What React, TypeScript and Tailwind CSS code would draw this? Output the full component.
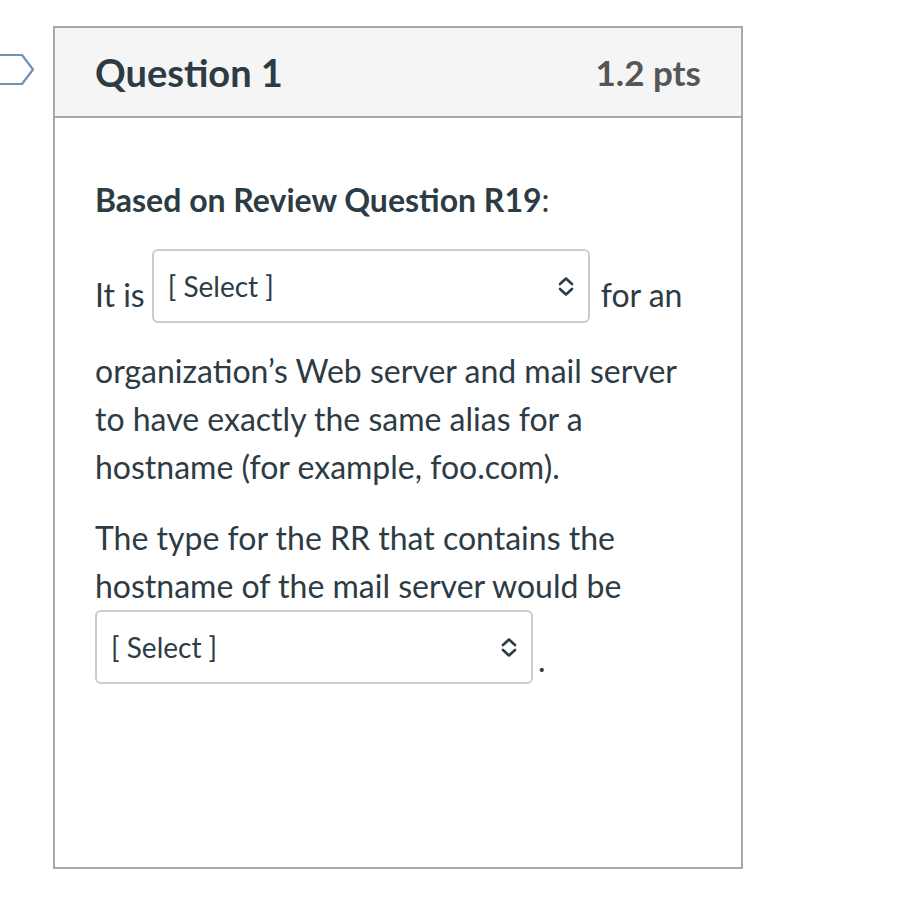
import React from "react"

function Chevrons() {
    return (
        <svg width="18" height="21" viewBox="0 0 18 21" fill="none">
            <path d="M3 8 L9 2.5 L15 8" stroke="#2d3b45" strokeWidth="2.6" strokeLinecap="round" strokeLinejoin="round" />
            <path d="M3 13 L9 18.5 L15 13" stroke="#2d3b45" strokeWidth="2.6" strokeLinecap="round" strokeLinejoin="round" />
        </svg>
    )
}

function SelectBox() {
    return (
        <div className="flex items-center justify-between w-[438px] h-[74px] shrink-0 rounded-[6px] border-2 border-[#c7cdd1] bg-white pl-[14px] pr-[13px]">
            <span className="text-[28px] leading-none text-[#2d3b45]">[ Select ]</span>
            <Chevrons />
        </div>
    )
}

export default function App() {
    return (
        <div className="min-h-screen bg-white flex pt-[26px]" style={{ fontFamily: "Lato, 'Noto Sans', sans-serif" }}>
            {/* flag marker */}
            <div className="w-[53px] shrink-0 pt-[27px]">
                <svg width="53" height="33" viewBox="0 0 53 33" fill="none">
                    <path d="M-10 2 L22 2 L33 16.5 L22 31 L-10 31 Z" fill="white" stroke="#6f93b5" strokeWidth="2.2" strokeLinejoin="round" />
                </svg>
            </div>

            <div className="w-[690px] h-[843px] border-2 border-[#a8a8a8] flex flex-col text-[#2d3b45]">
                {/* Header */}
                <div className="h-[90px] bg-[#f5f5f5] border-b-2 border-[#a8a8a8] flex items-center justify-between px-[40px]">
                    <h2 className="text-[38px] font-bold leading-none">Question 1</h2>
                    <span className="text-[35px] font-bold leading-none text-[#565656]">1.2 pts</span>
                </div>

                {/* Body */}
                <div className="px-[40px] pt-[58px] text-[32px] leading-[48px]">
                    <p className="mb-[25px]"><span className="font-bold">Based on Review Question R19</span>:</p>

                    <div className="flex items-start">
                        <span className="mt-[22px] mr-[7px]">It is</span>
                        <SelectBox />
                        <span className="mt-[22px] ml-[11px]">for an</span>
                    </div>

                    <p className="mt-[24px] mb-[23px]">
                        organization’s Web server and mail server to have exactly the same alias for a hostname (for example, foo.com).
                    </p>

                    <p>The type for the RR that contains the hostname of the mail server would be</p>
                    <div className="flex">
                        <SelectBox />
                        <span className="self-end ml-[5px]">.</span>
                    </div>
                </div>
            </div>
        </div>
    )
}
